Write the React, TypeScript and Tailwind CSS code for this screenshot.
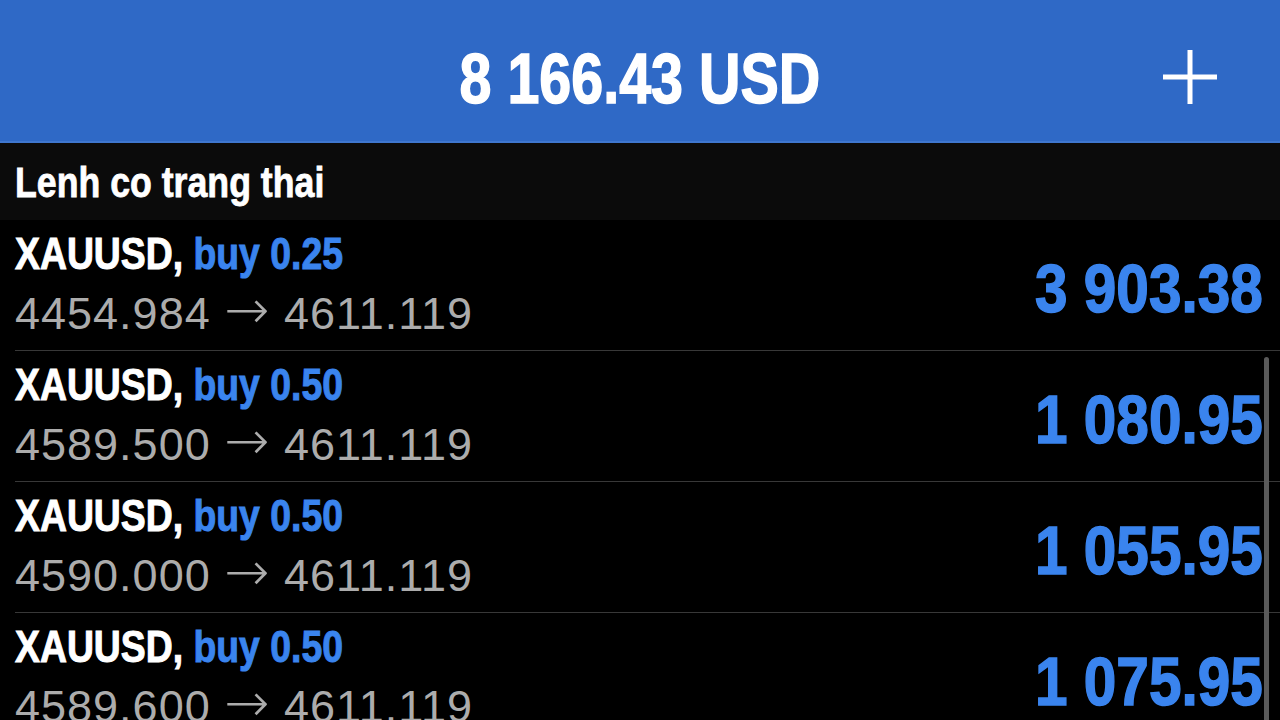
import React from 'react';

type Position = {
  symbol: string;
  side: string;
  lots: string;
  open: string;
  current: string;
  profit: string;
};

const POSITIONS: Position[] = [
  { symbol: 'XAUUSD', side: 'buy', lots: '0.25', open: '4454.984', current: '4611.119', profit: '3 903.38' },
  { symbol: 'XAUUSD', side: 'buy', lots: '0.50', open: '4589.500', current: '4611.119', profit: '1 080.95' },
  { symbol: 'XAUUSD', side: 'buy', lots: '0.50', open: '4590.000', current: '4611.119', profit: '1 055.95' },
  { symbol: 'XAUUSD', side: 'buy', lots: '0.50', open: '4589.600', current: '4611.119', profit: '1 075.95' },
];

// condensed bold look: Liberation Sans Bold squeezed horizontally, thickened a bit
function PositionRow({ p }: { p: Position }) {
  return (
    <div className="pl-[15px]">
      <div className="flex h-[131px] border-b border-[#383838] pr-[17px]">
        <div className="flex-1 flex flex-col pt-[4px]">
          <div className="h-[60px] text-[45px] leading-[60px] font-bold text-white whitespace-nowrap font-['Liberation_Sans',sans-serif] [-webkit-text-stroke:1px]">
            <span className="inline-block origin-left scale-x-[0.83]">
              {p.symbol}, <span className="text-[#3a84ee]">{p.side} {p.lots}</span>
            </span>
          </div>
          <div className="h-[60px] text-[45px] leading-[60px] tracking-[1px] text-[#acacac] whitespace-nowrap font-['Liberation_Sans',sans-serif]">
            {p.open}{' '}
            <span className="relative -top-[1px] text-[54px] leading-none font-['DejaVu_Sans',sans-serif] font-extralight">→</span>
            {' '}{p.current}
          </div>
        </div>
        <div className="self-start mt-[34px] text-[68px] leading-none font-bold text-[#3a84ee] whitespace-nowrap font-['Liberation_Sans',sans-serif] [-webkit-text-stroke:1.5px]">
          <span className="inline-block origin-right scale-x-[0.86]">{p.profit}</span>
        </div>
      </div>
    </div>
  );
}

export default function App() {
  return (
    <div className="relative w-[1280px] h-[720px] overflow-hidden bg-black">
      {/* Balance header */}
      <div className="relative h-[141px] bg-[#2f69c6] flex justify-center pt-[44px]">
        <div className="text-[70px] leading-none font-bold text-white whitespace-nowrap font-['Liberation_Sans',sans-serif] [-webkit-text-stroke:1.5px]">
          <span className="inline-block scale-x-[0.82]">8 166.43 USD</span>
        </div>
        <svg className="absolute right-[63px] top-[50px]" width="54" height="54" viewBox="0 0 54 54">
          <path d="M27 0V54M0 27H54" stroke="white" strokeWidth="5" />
        </svg>
      </div>
      <div className="h-[2px] bg-[#3f77cf]" />

      {/* Section title */}
      <div className="h-[77px] bg-[#0b0b0b] pl-[15px] pt-[18px]">
        <div className="text-[43px] leading-none font-bold text-white whitespace-nowrap font-['Liberation_Sans',sans-serif] [-webkit-text-stroke:0.8px]">
          <span className="inline-block origin-left scale-x-[0.83]">Lenh co trang thai</span>
        </div>
      </div>

      {POSITIONS.map((p, i) => (
        <PositionRow key={i} p={p} />
      ))}

      {/* scroll indicator */}
      <div className="absolute left-[1264px] top-[357px] w-[5px] h-[400px] rounded-full bg-[#5a5a5a]" />
    </div>
  );
}
